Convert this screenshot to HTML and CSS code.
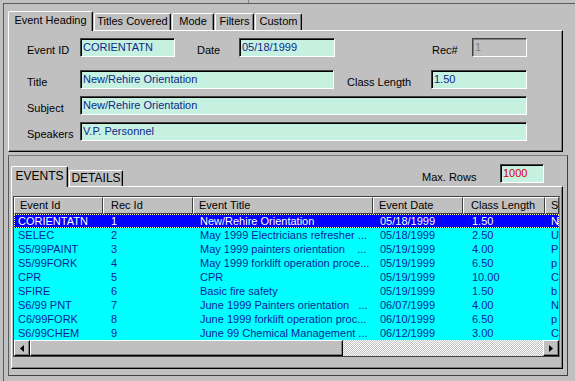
FILE: index.html
```html
<!DOCTYPE html>
<html lang="en">
<head>
    <meta charset="UTF-8">
    <title>Event Heading</title>
    <link rel="stylesheet" href="styles.css">
</head>
<body>
    <div class="topstrip"></div>

    <div class="window">

        <div class="tabs">
            <div class="tab active w-heading">Event Heading</div>
            <div class="tab w-titles">Titles Covered</div>
            <div class="tab w-mode">Mode</div>
            <div class="tab w-filters">Filters</div>
            <div class="tab w-custom">Custom</div>
        </div>

        <div class="panel top-panel">
            <div class="row first">
                <span class="label">Event ID</span>
                <div class="field w95">CORIENTATN</div>
                <span class="label date-label">Date</span>
                <div class="field w96">05/18/1999</div>
                <span class="label rec-label">Rec#</span>
                <div class="field disabled w55">1</div>
            </div>
            <div class="row">
                <span class="label">Title</span>
                <div class="field w254">New/Rehire Orientation</div>
                <span class="label len-label">Class Length</span>
                <div class="field w96">1.50</div>
            </div>
            <div class="row">
                <span class="label">Subject</span>
                <div class="field wide">New/Rehire Orientation</div>
            </div>
            <div class="row">
                <span class="label">Speakers</span>
                <div class="field wide">V.P. Personnel</div>
            </div>
        </div>

        <div class="frame">
            <div class="frame-head">
                <div class="tabs small">
                    <div class="tab active w-events">EVENTS</div>
                    <div class="tab w-details">DETAILS</div>
                </div>
                <div class="max-rows">
                    <span class="label">Max. Rows</span>
                    <div class="field red w44">1000</div>
                </div>
            </div>

            <div class="panel grid-panel">
                <div class="grid">
                    <div class="grid-row header">
                        <div class="cell c1">Event Id</div>
                        <div class="cell c2">Rec Id</div>
                        <div class="cell c3">Event Title</div>
                        <div class="cell c4">Event Date</div>
                        <div class="cell c5">Class Length</div>
                        <div class="cell c6">S</div>
                    </div>
                    <div id="rows"></div>
                    <div class="hscroll">
                        <div class="sbtn">
                            <svg width="4" height="7" viewBox="0 0 4 7"><polygon points="4,0 4,7 0,3.5" fill="#000"/></svg>
                        </div>
                        <div class="thumb"></div>
                        <div class="track"></div>
                        <div class="sbtn">
                            <svg width="4" height="7" viewBox="0 0 4 7"><polygon points="0,0 0,7 4,3.5" fill="#000"/></svg>
                        </div>
                    </div>
                </div>
            </div>
        </div>
    </div>

    <script>
        // event list shown in the grid
        const events = [
            ["CORIENTATN", "1", "New/Rehire Orientation", "05/18/1999", "1.50", "N"],
            ["SELEC", "2", "May 1999 Electricians refresher ...", "05/18/1999", "2.50", "U"],
            ["S5/99PAINT", "3", "May 1999 painters orientation    ...", "05/19/1999", "4.00", "P"],
            ["S5/99FORK", "4", "May 1999 forklift operation proce...", "05/19/1999", "6.50", "p"],
            ["CPR", "5", "CPR", "05/19/1999", "10.00", "C"],
            ["SFIRE", "6", "Basic fire safety", "05/19/1999", "1.50", "b"],
            ["S6/99 PNT", "7", "June 1999 Painters orientation   ...", "06/07/1999", "4.00", "N"],
            ["C6/99FORK", "8", "June 1999 forklift operation proc...", "06/10/1999", "6.50", "p"],
            ["S6/99CHEM", "9", "June 99 Chemical Management ...", "06/12/1999", "3.00", "C"]
        ];

        const rows = document.getElementById("rows");
        events.forEach((ev, i) => {
            const row = document.createElement("div");
            row.className = "grid-row data" + (i === 0 ? " selected" : "");
            ev.forEach((val, c) => {
                const cell = document.createElement("div");
                cell.className = "cell c" + (c + 1);
                cell.textContent = val;
                row.appendChild(cell);
            });
            rows.appendChild(row);
        });
    </script>
</body>
</html>
```

FILE: styles.css
```css
body {
    margin: 0;
    background-color: #c0c0c0;
    font-family: "Liberation Sans", Arial, sans-serif;
    font-size: 11px;
    color: #000;
    overflow: hidden;
}
.topstrip {
    width: 248px;
    height: 3px;
    border-right: 1px solid #808080;
}
.window {
    margin-left: 3px;
    height: 378px;
    box-sizing: border-box;
    border-top: 1px solid #5a5a5a;
    border-left: 1px solid #5a5a5a;
    padding: 7px 0 0 4px;
}

/* tabs */
.tabs {
    display: flex;
    align-items: flex-end;
    height: 19px;
}
.tab {
    box-sizing: border-box;
    height: 17px;
    line-height: 15px;
    text-align: center;
    border-top: 1px solid #fff;
    border-left: 1px solid #fff;
    border-right: 1px solid #000;
    box-shadow: inset -1px 0 0 #808080;
    border-radius: 2px 2px 0 0;
    background-color: #c0c0c0;
    margin-left: 1px;
}
.tab.active {
    height: 20px;
    line-height: 17px;
    margin-bottom: -1px;
    margin-left: 0;
    position: relative;
    z-index: 1;
}
.w-heading { width: 85px; }
.w-titles { width: 77px; }
.w-mode { width: 42px; }
.w-filters { width: 39px; }
.w-custom { width: 47px; }

.tabs.small {
    height: 20px;
}
.tabs.small .tab {
    height: 16px;
    line-height: 15px;
}
.tabs.small .tab.active {
    height: 21px;
    line-height: 19px;
    font-size: 12px;
}
.w-events { width: 57px; }
.w-details { width: 54px; font-size: 12px; }

/* panels */
.panel {
    box-sizing: border-box;
    border-top: 1px solid #fff;
    border-left: 1px solid #fff;
    border-right: 1px solid #000;
    border-bottom: 1px solid #000;
    box-shadow: inset -1px -1px 0 #808080;
}
.top-panel {
    width: 555px;
    height: 122px;
    padding: 7px 0 0 18px;
}
.row {
    display: flex;
    align-items: center;
    height: 19px;
    margin-bottom: 7px;
}
.row.first {
    margin-bottom: 13px;
}
.label {
    width: 53px;
    padding-top: 4px;
    white-space: nowrap;
}
.date-label { width: 42px; margin-left: 22px; }
.rec-label { width: 40px; margin-left: 97px; }
.len-label { width: 84px; margin-left: 13px; }

.field {
    box-sizing: border-box;
    height: 19px;
    line-height: 17px;
    padding-left: 2px;
    background-color: #c6f0e0;
    color: #0a2a8a;
    border-top: 1px solid #404040;
    border-left: 1px solid #404040;
    border-right: 1px solid #fff;
    border-bottom: 1px solid #fff;
    box-shadow: inset 1px 1px 0 #000;
    white-space: nowrap;
    overflow: hidden;
}
.field.disabled {
    background-color: #c0c0c0;
    color: #808080;
    box-shadow: inset 1px 1px 0 #808080;
}
.field.red {
    color: #d00000;
}
.w95 { width: 95px; }
.w96 { width: 96px; }
.w55 { width: 55px; }
.w44 { width: 44px; }
.w254 { width: 254px; }
.wide { width: 447px; }

/* lower frame */
.frame {
    box-sizing: border-box;
    margin-top: 3px;
    width: 560px;
    height: 221px;
    border-top: 1px solid #808080;
    border-left: 1px solid #5a5a5a;
    border-right: 1px solid #404040;
    border-bottom: 1px solid #404040;
    padding-left: 2px;
}
.frame-head {
    display: flex;
    align-items: flex-end;
    justify-content: space-between;
    height: 30px;
}
.max-rows {
    display: flex;
    align-items: center;
    margin: 0 23px 3px 0;
}
.max-rows .label {
    width: 78px;
    padding-top: 6px;
}
.grid-panel {
    width: 552px;
    height: 183px;
    padding: 9px 0 0 1px;
}

/* grid */
.grid {
    width: 547px;
    box-sizing: border-box;
    border-top: 1px solid #404040;
    border-left: 1px solid #404040;
    border-right: 1px solid #808080;
    border-bottom: 1px solid #404040;
}
.grid-row {
    display: grid;
    grid-template-columns: 89px 90px 180px 90px 82px 14px;
}
.cell {
    white-space: pre;
    overflow: hidden;
    padding-left: 7px;
}
.cell.c1 { padding-left: 4px; }
.cell.c2 { padding-left: 8px; }
.cell.c5 { padding-left: 9px; }
.cell.c6 { padding-left: 6px; }
.header .cell {
    box-sizing: border-box;
    height: 17px;
    line-height: 15px;
    border-top: 1px solid #fff;
    border-left: 1px solid #fff;
    border-right: 1px solid #404040;
    border-bottom: 1px solid #404040;
    padding-left: 5px;
}
.header .c2 { padding-left: 7px; }
.header .c5 { padding-left: 7px; }
.data {
    height: 14px;
    line-height: 14px;
    background-color: #00ffff;
    color: #0a1e9a;
}
.data.selected {
    background-color: #0000ff;
    color: #fff;
    outline: 1px dotted #ffffa0;
    outline-offset: -1px;
}

/* horizontal scrollbar */
.hscroll {
    display: flex;
    height: 16px;
}
.sbtn, .thumb {
    box-sizing: border-box;
    background-color: #c0c0c0;
    border-top: 1px solid #fff;
    border-left: 1px solid #fff;
    border-right: 1px solid #000;
    border-bottom: 1px solid #000;
    box-shadow: inset -1px -1px 0 #808080;
}
.sbtn {
    width: 16px;
    display: flex;
    align-items: center;
    justify-content: center;
}
.thumb {
    width: 313px;
}
.track {
    flex: 1;
    background-image: repeating-conic-gradient(#ffffff 0 25%, #c0c0c0 0 50%);
    background-size: 2px 2px;
}
```
